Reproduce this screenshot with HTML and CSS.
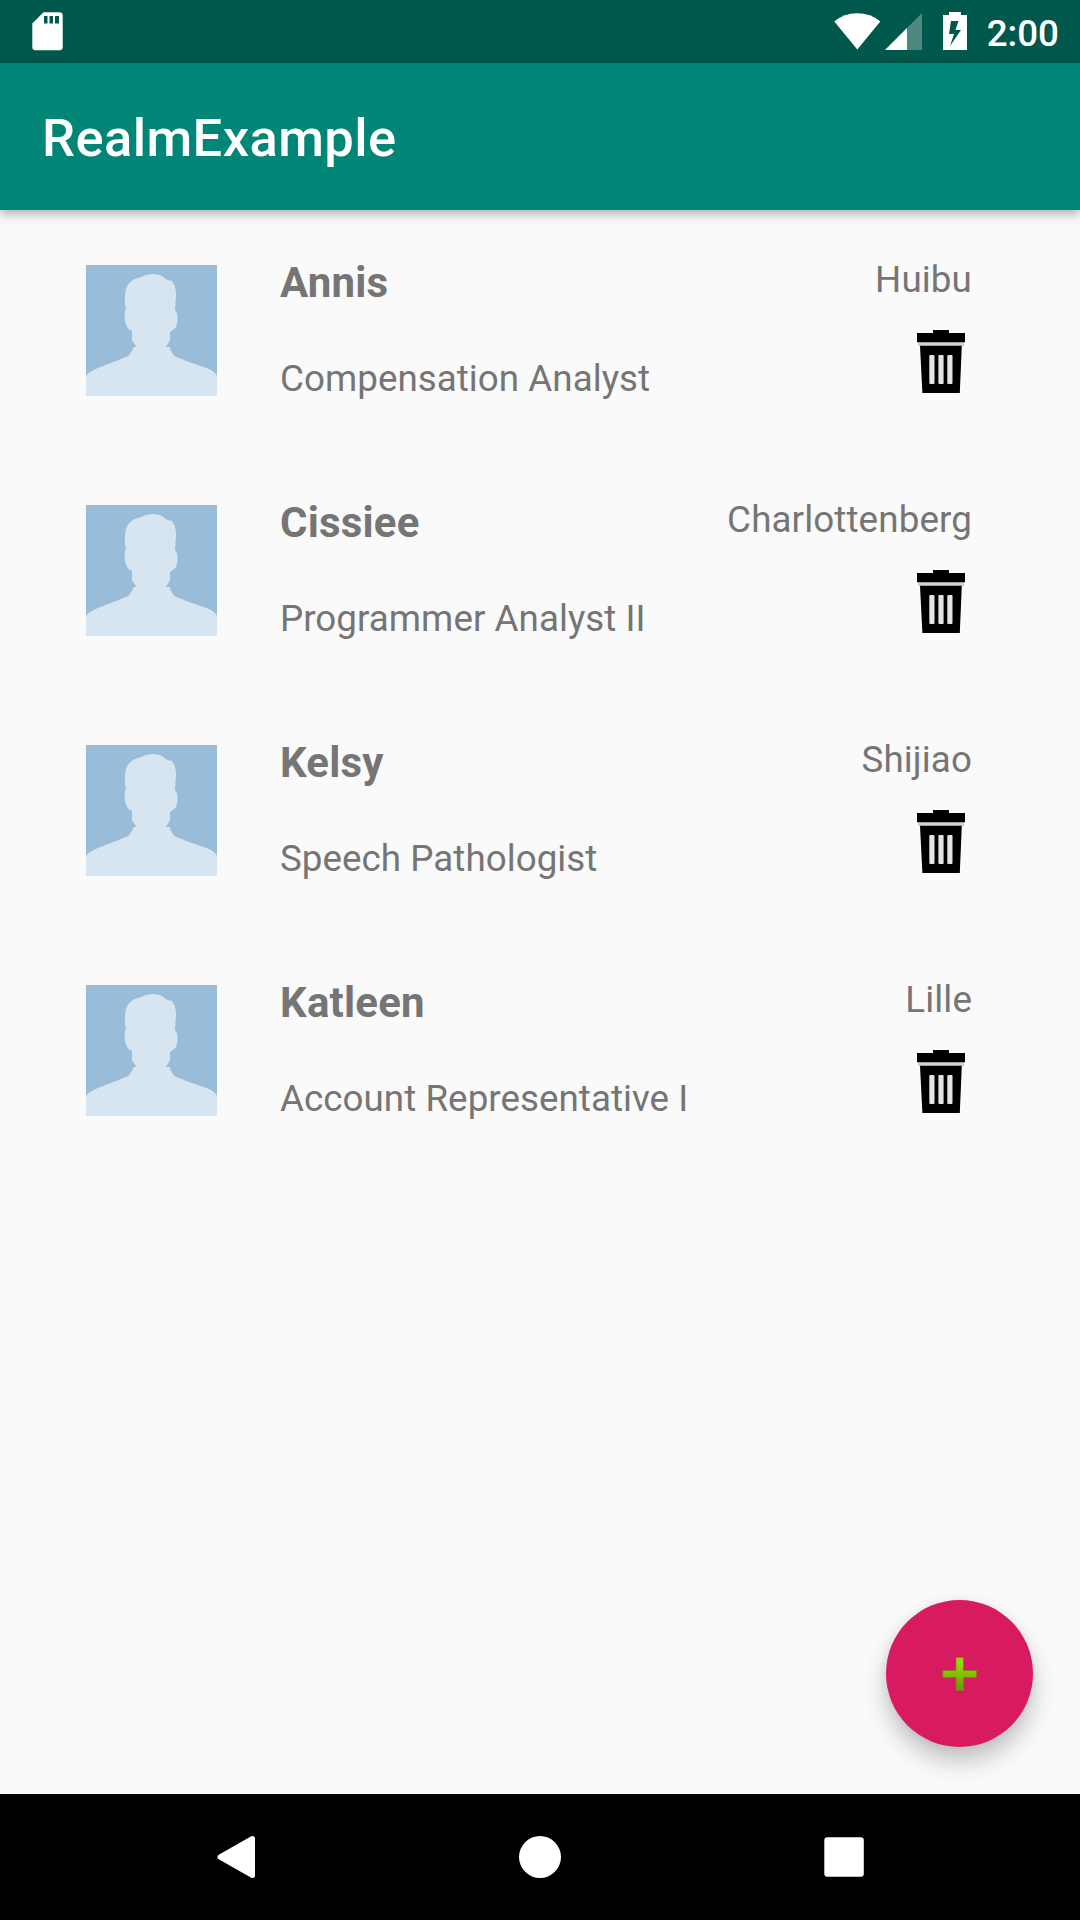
FILE: index.html
```html
<!DOCTYPE html>
<html lang="en">
<head>
<meta charset="utf-8">
<title>RealmExample</title>
<link rel="stylesheet" href="styles.css">
</head>
<body>
<svg class="defs" width="0" height="0" aria-hidden="true">
  <symbol id="avatar" viewBox="0 0 131 131">
    <rect width="131" height="131" fill="#99bdd9"/>
    <path fill="#d7e5f0" d="M0 111C3 107 7 105 12 103L35 94C39 92 42 92 44 89C46 86 47 84 48 82H50C50 79 47 78 46 75V65H44C40 63 38 54 39 46L40 44C38 36 39 29 40 24C43 16 48 14 55 12C61 9 67 8 74 10C78 12 80 14 82 15.500H85C89 19 90 24 90 31L89 45C92 48 92 55 91 59C90 63 88 64 86 65.500L84 67V75C83 78 81 79 80 82H83.500C85 86 87 90 89 91.500L103 97L123 104C127 106 130 108 131 111V131H0Z"/>
  </symbol>
  <symbol id="trash" viewBox="0 0 48 63">
    <path fill="#aaa" opacity=".5" d="M1 12H47V16H1Z"/>
    <path d="M16 -2H32V3H48V12.300H0V3H16Z"/>
    <path d="M3 15.700H44.800L42.700 65H5.500Z"/>
    <g fill="#e4e4e4"><rect x="12.300" y="25" width="5.200" height="29" rx="1"/><rect x="21.400" y="25" width="5.200" height="29" rx="1"/><rect x="30.300" y="25" width="5.200" height="29" rx="1"/></g>
  </symbol>
</svg>
<div class="screen">
  <header class="status">
    <svg class="sd" width="31" height="39" viewBox="0 0 31 39"><path fill="#fff" fill-rule="evenodd" d="M11.500 .300H27.500Q30.700 .300 30.700 3.500V35Q30.700 38.200 27.500 38.200H3.500Q.300 38.200 .300 35V11.500ZM12 4V11.500H15.500V4ZM17.500 4V11.500H21V4ZM23 4V11.500H27V4Z"/></svg>
    <div class="indicators">
      <svg width="47" height="37" viewBox="0 0 47 37"><path fill="#fff" d="M.300 8.500Q10 .300 23.300 .300T46.300 8.500L23.300 36.600Z"/></svg>
      <svg class="signal" width="37" height="37" viewBox="0 0 37 37"><path fill="#fff" opacity=".3" d="M0 37L37 0V37Z"/><path fill="#fff" d="M0 37L22 15V37Z"/></svg>
      <svg class="battery" width="24" height="38" viewBox="0 0 24 38"><path fill="#fff" fill-rule="evenodd" d="M6 0H18V3H24V38H0V3H6ZM8 9L6 22H11L7 34L18 18H12.500L15.500 9Z"/></svg>
      <span class="clock">2:00</span>
    </div>
  </header>
  <div class="toolbar"><h1>RealmExample</h1></div>
  <main class="list">
    <article class="row"><svg class="avatar"><use href="#avatar"/></svg><div class="person"><h2>Annis</h2><p>Compensation Analyst</p></div><div class="side"><span>Huibu</span><svg class="trash"><use href="#trash"/></svg></div></article>
    <article class="row"><svg class="avatar"><use href="#avatar"/></svg><div class="person"><h2>Cissiee</h2><p>Programmer Analyst II</p></div><div class="side"><span>Charlottenberg</span><svg class="trash"><use href="#trash"/></svg></div></article>
    <article class="row"><svg class="avatar"><use href="#avatar"/></svg><div class="person"><h2>Kelsy</h2><p>Speech Pathologist</p></div><div class="side"><span>Shijiao</span><svg class="trash"><use href="#trash"/></svg></div></article>
    <article class="row"><svg class="avatar"><use href="#avatar"/></svg><div class="person"><h2>Katleen</h2><p>Account Representative I</p></div><div class="side"><span>Lille</span><svg class="trash"><use href="#trash"/></svg></div></article>
  </main>
  <button class="fab" aria-label="Add">
    <svg width="36" height="36" viewBox="0 0 36 36"><defs><linearGradient id="lime" x1="0" y1="0" x2="0" y2="1"><stop offset=".2" stop-color="#92d900"/><stop offset=".9" stop-color="#68a000"/></linearGradient></defs><path fill="url(#lime)" stroke="#8a7a18" stroke-width=".8" stroke-linejoin="round" d="M14 1.500H21.500V14.500H34.500V21.500H21.500V34.500H14V21.500H.800V14.500H14Z"/></svg>
  </button>
  <nav class="navbar">
    <svg width="46" height="46" viewBox="0 0 46 46"><path fill="#fff" stroke="#fff" stroke-width="5" stroke-linejoin="round" d="M7 23L39.500 4.500V41.500Z"/></svg>
    <svg width="46" height="46" viewBox="0 0 46 46"><circle cx="23" cy="23" r="21" fill="#fff"/></svg>
    <svg width="46" height="46" viewBox="0 0 46 46"><rect x="3.300" y="3.300" width="39.500" height="39.500" rx="3" fill="#fff"/></svg>
  </nav>
</div>
</body>
</html>
```
FILE: styles.css
```css
* { box-sizing: border-box; }
body { margin: 0; font-family: Roboto, sans-serif; background: #fafafa; }
h1, h2, p { margin: 0; }
svg { display: block; flex: none; }
.defs { position: absolute; }
.screen { position: relative; width: 1080px; height: 1920px; display: flex; flex-direction: column; overflow: hidden; }
.status { height: 63px; flex: none; display: flex; justify-content: space-between; align-items: flex-start; padding: 12px 21px 0 32px; background: #00574b; }
.indicators { display: flex; align-items: flex-start; }
.indicators svg { margin-top: 1px; }
.indicators .signal { margin-left: 4px; }
.indicators .battery { margin: 0 20px 0 21px; }
.clock { color: #fff; font-size: 36.75px; font-weight: 500; line-height: 43px; }
.toolbar { height: 147px; flex: none; display: flex; align-items: center; padding: 2px 0 0 42px; background: #008577; color: #fff; box-shadow: 0 4px 10px rgba(0,0,0,.3); }
.toolbar h1 { font-size: 52.5px; line-height: 62px; font-weight: 500; letter-spacing: .4px; }
.list { flex: 1; padding: 48px 108px 0 86px; }
.row { height: 240px; display: flex; align-items: flex-start; color: #757575; font-size: 36.75px; line-height: 43px; }
.avatar { width: 131px; height: 131px; margin-top: 7px; }
.person { flex: 1; margin-left: 63px; white-space: nowrap; letter-spacing: .04px; }
.person h2 { font-size: 42px; line-height: 49px; font-weight: 700; margin-bottom: 50px; letter-spacing: .2px; }
.side { display: flex; flex-direction: column; align-items: flex-end; gap: 29px; letter-spacing: .12px; }
.trash { width: 48px; height: 63px; margin-right: 7px; filter: blur(.7px); }
.fab { position: absolute; right: 47px; bottom: 173px; width: 147px; height: 147px; padding: 0; border: 0; border-radius: 50%; background: #d81b60; display: flex; align-items: center; justify-content: center; box-shadow: 0 14px 24px rgba(0,0,0,.23), 0 1px 8px rgba(0,0,0,.06); }
.navbar { height: 126px; flex: none; display: flex; justify-content: space-between; align-items: center; padding: 0 213px; background: #000; }
```
